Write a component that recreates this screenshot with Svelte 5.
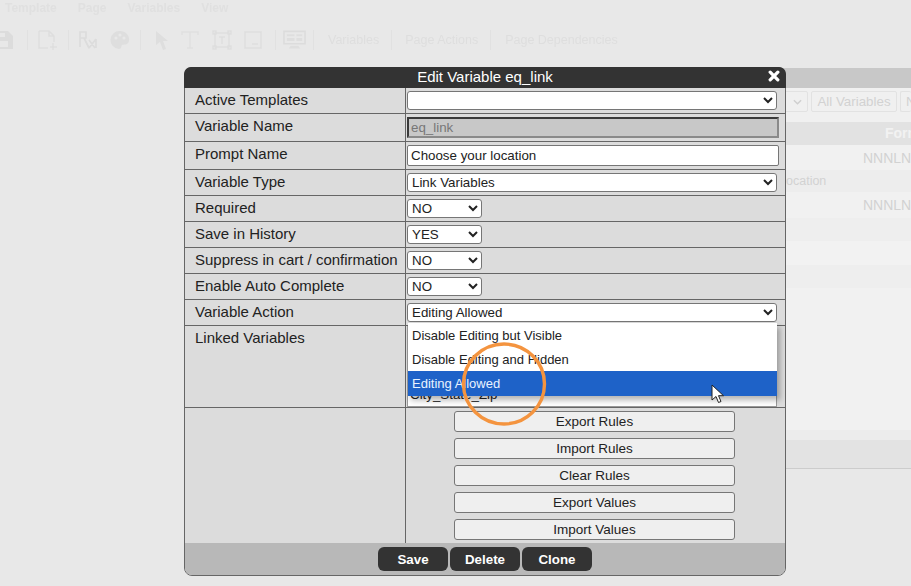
<script>
  const rows = [
    { label: 'Active Templates', h: 26, kind: 'select', value: '', options: [''], size: 'wide' },
    { label: 'Variable Name', h: 28, kind: 'locked', value: 'eq_link' },
    { label: 'Prompt Name', h: 28, kind: 'input', value: 'Choose your location' },
    { label: 'Variable Type', h: 26, kind: 'select', value: 'Link Variables', options: ['Link Variables'], size: 'wide' },
    { label: 'Required', h: 26, kind: 'select', value: 'NO', options: ['NO', 'YES'], size: 'small' },
    { label: 'Save in History', h: 26, kind: 'select', value: 'YES', options: ['NO', 'YES'], size: 'small' },
    { label: 'Suppress in cart / confirmation', h: 26, kind: 'select', value: 'NO', options: ['NO', 'YES'], size: 'small' },
    { label: 'Enable Auto Complete', h: 26, kind: 'select', value: 'NO', options: ['NO', 'YES'], size: 'small' },
    { label: 'Variable Action', h: 26, kind: 'select', value: 'Editing Allowed', options: ['Editing Allowed'], size: 'wide' }
  ];
  const tools = ['Export Rules', 'Import Rules', 'Clear Rules', 'Export Values', 'Import Values'];
  const actions = ['Save', 'Delete', 'Clone'];
  const menu = ['Template', 'Page', 'Variables', 'View'];
  const choices = ['Disable Editing but Visible', 'Disable Editing and Hidden', 'Editing Allowed'];
</script>

<div class="page">
  <nav class="menu">
    {#each menu as m}<span>{m}</span>{/each}
  </nav>

  <div class="toolbar">
    <svg class="ic save" viewBox="0 0 20 20"><path d="M0 1h14l5 5v13H0z" fill="#dcdcdc"/><rect x="4" y="11" width="10" height="6" fill="#e8e8e8"/><rect x="3" y="3" width="8" height="4" fill="#e8e8e8"/></svg>
    <i class="sep s1"></i>
    <svg class="ic doc" viewBox="0 0 20 20"><path d="M1 1h10l5 5v6M10 18H1V1M11 1v5h5M15 13v7M12 17h7" fill="none" stroke="#dedede" stroke-width="1.5"/></svg>
    <i class="sep s2"></i>
    <svg class="ic rx" viewBox="0 0 20 20"><path d="M2 17V2h6v6H2M6 8l5 10M11 18l7-9M18 9v9M11 10l6 8" fill="none" stroke="#dcdcdc" stroke-width="1.7"/></svg>
    <svg class="ic pal" viewBox="0 0 20 20"><path d="M10 1a9 9 0 0 0-1 18c3 0 2-3 3-4s6 1 7-4c1-6-4-10-9-10z" fill="#dedede"/><circle cx="6" cy="8" r="1.6" fill="#e8e8e8"/><circle cx="10" cy="5" r="1.6" fill="#e8e8e8"/><circle cx="14" cy="8" r="1.6" fill="#e8e8e8"/></svg>
    <i class="sep s3"></i>
    <svg class="ic arr" viewBox="0 0 20 20"><path d="M4 1l12 10h-5l3 8-3 1-3-8-4 3z" fill="#dedede"/></svg>
    <svg class="ic tt" viewBox="0 0 20 20"><path d="M2 5V2h16v3M10 2v16M7 18h6" fill="none" stroke="#e0e0e0" stroke-width="1.5"/></svg>
    <svg class="ic tb" viewBox="0 0 20 20"><path d="M3 3h14v14H3zM7 7h6M10 7v7M1 1h3v3H1zM16 1h3v3h-3zM1 16h3v3H1zM16 16h3v3h-3z" fill="none" stroke="#dedede" stroke-width="1.3"/></svg>
    <svg class="ic im" viewBox="0 0 20 20"><path d="M2 2h16v16H2zM9 14h6" fill="none" stroke="#dedede" stroke-width="1.5"/></svg>
    <i class="sep s4"></i>
    <svg class="ic mon" viewBox="0 0 24 20"><path d="M1 1h22v13H1z" fill="none" stroke="#dcdcdc" stroke-width="1.6"/><path d="M4 4h8v2H4zM14 4h6v2h-6zM4 8h8v3H4zM14 8h6v3h-6zM8 16h8l2 3H6z" fill="#dedede"/></svg>
    <i class="sep s5"></i>
    <span class="tab t1">Variables</span>
    <i class="sep"></i>
    <span class="tab t2">Page Actions</span>
    <i class="sep"></i>
    <span class="tab t3">Page Dependencies</span>
  </div>

  <section class="panel">
    <div class="panel-title"></div>
    <div class="filters">
      <span class="fsel"><svg viewBox="0 0 10 6" width="9" height="6"><path d="M1 1l4 4 4-4" fill="none" stroke="#cfcfcf" stroke-width="1.6"/></svg></span>
      <span class="fbtn">All Variables</span>
      <span class="fbtn clip">N</span>
    </div>
    <div class="thead"><span>Form</span></div>
    <div class="trow h25"><span>NNNLNNN</span></div>
    <div class="trow sub"><span class="loc">ocation</span></div>
    <div class="trow h26"><span>NNNLNNN</span></div>
    <div class="band b1"></div>
    <div class="band b2"></div>
    <div class="band b1"></div>
    <div class="band fill"></div>
    <div class="band b3"></div>
    <div class="band foot"></div>
  </section>

  <div class="dialog">
    <header class="title">
      <span>Edit Variable eq_link</span>
      <svg class="close" viewBox="0 0 12 12" width="12" height="12"><path d="M2.2 2.2l7.6 7.6M9.800 2.200l-7.600 7.600" stroke="#fff" stroke-width="3.3" stroke-linecap="round"/></svg>
    </header>

    {#each rows as r}
      <div class="row" style="height:{r.h}px">
        <div class="label">{r.label}</div>
        <div class="field">
          {#if r.kind === 'select'}
            <select class={r.size} value={r.value}>
              {#each r.options as o}<option>{o}</option>{/each}
            </select>
          {:else if r.kind === 'locked'}
            <input class="locked" value={r.value} disabled />
          {:else}
            <input class="text" value={r.value} />
          {/if}
        </div>
      </div>
    {/each}

    <div class="row linked">
      <div class="label">Linked Variables</div>
      <div class="field top">
        <div class="listbox"><span>City_State_Zip</span></div>
      </div>
    </div>

    <div class="row tools">
      <div class="label"></div>
      <div class="field stack">
        {#each tools as t}<button class="tool">{t}</button>{/each}
      </div>
    </div>

    <footer class="actions">
      {#each actions as a}<button class="act">{a}</button>{/each}
    </footer>

    <ul class="dropdown">
      {#each choices as c, i}
        <li class:on={i === 2}>{c}</li>
      {/each}
    </ul>
  </div>

  <svg class="ring" viewBox="0 0 88 88" width="88" height="88"><ellipse cx="44" cy="44" rx="40.5" ry="40" fill="none" stroke="#f4943f" stroke-width="3.4"/></svg>
  <svg class="cursor" viewBox="0 0 13 20" width="13" height="20"><path d="M1 1v15l4-3.500 2.500 6 2.500-1-2.500-5.800h5z" fill="#fff" stroke="#222" stroke-width="1"/></svg>
</div>

<style>
  :global(body) {
    margin: 0;
    background: #e8e8e8;
    font-family: "Liberation Sans", Arial, sans-serif;
  }
  .page {
    position: relative;
    width: 911px;
    height: 586px;
    overflow: hidden;
    background: #e8e8e8;
  }
  .menu {
    display: flex;
    gap: 21px;
    height: 21px;
    padding: 1px 0 0 5px;
    font-size: 12px;
    font-weight: 700;
    line-height: 14px;
    color: #e0e0e0;
    filter: blur(0.5px);
  }
  .toolbar {
    display: flex;
    align-items: center;
    height: 36px;
    margin-bottom: 10px;
    color: #dedede;
    font-size: 12.5px;
    filter: blur(0.6px);
  }
  .ic { flex: none; height: 20px; width: 20px; }
  .sep { flex: none; width: 1px; height: 20px; background: #e1e1e1; margin: 0 12px; }
  .save { margin-left: -6px; }
  .s1 { margin: 0 10px 0 13px; }
  .s2 { margin: 0 9px 0 10px; }
  .pal { margin-left: 12px; }
  .s3 { margin: 0 11px 0 10px; }
  .tt { margin-left: 8px; }
  .tb { margin-left: 12px; }
  .im { margin-left: 11px; }
  .s4 { margin: 0 7px 0 12px; }
  .mon { width: 23px; }
  .s5 { margin: 0 14px 0 7px; }
  .tab { white-space: nowrap; }
  .t2 { margin-left: 1px; }
  .t3 { margin-left: 2px; }

  .panel {
    margin-left: 200px;
    height: 401px;
    display: flex;
    flex-direction: column;
    color: #d2d2d2;
  }
  .panel-title { height: 20px; background: #c8c8c8; flex: none; }
  .filters {
    flex: none;
    height: 34px;
    background: #f0f0f0;
    display: flex;
    justify-content: flex-end;
    align-items: flex-start;
    gap: 3px;
    padding-top: 3px;
    box-sizing: border-box;
    font-size: 13.33px;
    overflow: hidden;
  }
  .fsel, .fbtn {
    flex: none;
    box-sizing: border-box;
    height: 21px;
    border: 1px solid #e2e2e2;
    border-radius: 2px;
    background: #f0f0f0;
    display: flex;
    align-items: center;
  }
  .fsel { width: 26px; justify-content: flex-end; padding-right: 5px; }
  .fbtn { width: 86px; justify-content: center; }
  .clip { width: 11px; justify-content: flex-start; padding-left: 5px; border-right: 0; overflow: hidden; }
  .thead {
    flex: none;
    height: 23px;
    background: #e2e2e2;
    color: #f2f2f2;
    font-size: 14px;
    line-height: 23px;
    text-align: right;
    white-space: nowrap;
    overflow: hidden;
  }
  .thead span { display: inline-block; width: 26px; font-weight: 700; text-align: left; overflow: hidden; }
  .trow {
    flex: none;
    background: #f1f1f1;
    font-size: 14px;
    text-align: right;
    overflow: hidden;
    white-space: nowrap;
    display: flex;
    justify-content: flex-end;
    align-items: center;
  }
  .trow span { display: block; width: 48px; overflow: hidden; }
  .h25 { height: 25px; }
  .h26 { height: 26px; }
  .sub { height: 22px; background: #ededed; justify-content: flex-start; font-size: 12.5px; }
  .trow .loc { width: auto; margin-left: 586px; }
  .band { flex: none; }
  .b1 { height: 23px; background: #eeeeee; }
  .b2 { height: 24px; background: #f2f2f2; }
  .fill { height: 142px; background: #f1f1f1; }
  .b3 { height: 10px; background: #ececec; }
  .foot { flex: 1; background: #e3e3e3; border-bottom: 1px solid #cccccc; }

  .dialog {
    position: absolute;
    left: 184px;
    top: 67px;
    width: 602px;
    height: 509px;
    box-sizing: border-box;
    border: 1px solid #666;
    border-radius: 8px;
    background: #dcdcdc;
    display: flex;
    flex-direction: column;
    color: #222;
    font-size: 15px;
  }
  .title {
    flex: none;
    box-sizing: border-box;
    height: 21px;
    background: #333;
    color: #fff;
    border-radius: 7px 7px 0 0;
    display: flex;
    align-items: center;
    justify-content: center;
    position: relative;
    margin: -1px -1px 0;
    padding-bottom: 3px;
    font-size: 15px;
  }
  .close { position: absolute; right: 6px; top: 3px; }
  .row {
    flex: none;
    display: flex;
    box-sizing: border-box;
    border-bottom: 1px solid #666;
  }
  .label {
    flex: none;
    width: 221px;
    box-sizing: border-box;
    padding: 3px 0 0 10px;
    border-right: 1px solid #666;
    white-space: nowrap;
    line-height: 17px;
  }
  .field { flex: 1; position: relative; display: flex; align-items: center; padding-left: 1px; }
  .field.top { align-items: flex-start; }
  select {
    box-sizing: border-box;
    height: 19px;
    background: #fff;
    border: 1px solid #767676;
    border-radius: 3px;
    font: 13.33px "Liberation Sans", Arial, sans-serif;
    color: #222;
    padding: 0;
  }
  .wide { width: 370px; }
  .small { width: 75px; }
  input {
    box-sizing: border-box;
    width: 372px;
    font: 13.33px "Liberation Sans", Arial, sans-serif;
    margin: 0;
  }
  .text {
    height: 21px;
    background: #fff;
    border: 1px solid #767676;
    border-radius: 2px;
    padding: 0 3px;
    color: #222;
  }
  .locked {
    height: 21px;
    background: #c8c8c8;
    border-style: solid;
    border-width: 2px;
    border-color: #3a3a3a #8a8a8a #8a8a8a #3a3a3a;
    padding: 0 2px;
    color: #777;
  }
  .linked { height: 82px; }
  .listbox {
    box-sizing: border-box;
    width: 370px;
    height: 81px;
    background: #fff;
    border: 1px solid #999;
    font-size: 13.33px;
    position: relative;
  }
  .listbox span { position: absolute; left: 2px; top: 60px; }
  .tools { height: 135px; border-bottom: 0; }
  .stack {
    flex-direction: column;
    justify-content: flex-start;
    align-items: flex-start;
    gap: 6px;
    padding: 3px 0 0 48px;
  }
  .tool {
    width: 281px;
    height: 21px;
    box-sizing: border-box;
    background: #efefef;
    border: 1px solid #767676;
    border-radius: 3px;
    color: #222;
    font: 13.5px "Liberation Sans", Arial, sans-serif;
    padding: 0;
  }
  .actions {
    flex: 1;
    background: #b8b8b8;
    border-radius: 0 0 7px 7px;
    display: flex;
    justify-content: center;
    align-items: flex-start;
    gap: 2px;
    padding-top: 4px;
  }
  .act {
    width: 70px;
    height: 24px;
    background: #333;
    color: #fff;
    border: 0;
    border-radius: 6px;
    font: 700 13.33px "Liberation Sans", Arial, sans-serif;
    padding: 0;
  }
  .dropdown {
    position: absolute;
    left: 223px;
    top: 255px;
    width: 369px;
    margin: 0;
    padding: 0;
    list-style: none;
    background: #fff;
    box-shadow: 3px 4px 6px rgba(0, 0, 0, 0.3);
    font-size: 13px;
    color: #222;
  }
  .dropdown li {
    height: 24px;
    line-height: 25px;
    padding-left: 4px;
  }
  .dropdown li.on {
    height: 25px;
    background: #1e62c8;
    color: #e8f2ff;
  }
  .ring { position: absolute; left: 460px; top: 340px; }
  .cursor { position: absolute; left: 711px; top: 384px; }
</style>
